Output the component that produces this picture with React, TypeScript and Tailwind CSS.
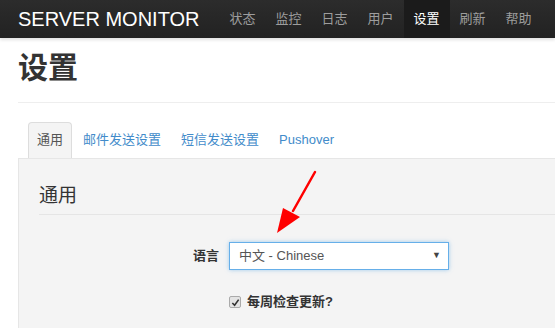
import React from 'react';

const navItems = ['状态', '监控', '日志', '用户', '设置', '刷新', '帮助'];
const tabs = ['通用', '邮件发送设置', '短信发送设置', 'Pushover'];

function App() {
  return (
    <div className="w-[555px] h-[328px] overflow-hidden bg-white text-[#333] font-['Liberation_Sans','Noto_Sans_CJK_SC',sans-serif] relative">
      {/* navbar */}
      <div className="h-[38px] flex items-stretch bg-gradient-to-b from-[#2c2c2c] to-[#222] shadow-[0_2px_3px_rgba(0,0,0,0.12)]">
        <div className="pl-[18px] pr-[20px] flex items-center text-[20px] text-white leading-none">SERVER MONITOR</div>
        <div className="flex">
          {navItems.map((item) => (
            <div
              key={item}
              className={
                item === '设置'
                  ? 'px-[10px] flex items-center text-[13px] text-white bg-[#1b1b1b]'
                  : 'px-[10px] flex items-center text-[13px] text-[#9d9d9d]'
              }>
              {item}
            </div>
          ))}
        </div>
      </div>

      <div className="pl-[18px] pt-[12px]">
        <h1 className="text-[30px] leading-[36px] font-bold text-[#333]">设置</h1>
        <div className="mt-[16px] h-px bg-[#eee]"></div>

        <div className="mt-[19px] pl-[10px] flex">
          {tabs.map((t, i) => (
            <div
              key={t}
              className={
                i === 0
                  ? 'px-[8px] mr-[2px] py-[7px] leading-[20px] text-[13px] text-[#555] bg-[#f4f4f4] border border-[#ddd] border-b-0 rounded-t-[4px]'
                  : 'px-[8px] mr-[2px] py-[7px] leading-[20px] text-[13px] text-[#428bca] border border-transparent'
              }>
              {t}
            </div>
          ))}
        </div>

        <div className="h-[200px] bg-[#f4f4f4] border-l border-t border-[#e6e6e6] pl-[20px] pt-[24px]">
          <div className="text-[19px] leading-[26px] pb-[5px] border-b border-[#e5e5e5] text-[#333]">通用</div>

          <div className="mt-[27px] flex items-center">
            <div className="w-[180px] text-right text-[13px] font-bold text-[#333]">语言</div>
            <div className="ml-[10px] w-[220px] h-[28px] bg-white border border-[#66afe9] shadow-[0_0_4px_rgba(102,175,233,0.6)] flex items-center justify-between pl-[9px] pr-[7px] text-[13px] text-[#555]">
              <span>中文 - Chinese</span>
              <span className="text-[9px] text-[#444]">▼</span>
            </div>
          </div>

          <div className="mt-[22px] pl-[190px] flex items-center h-[20px]">
            <div className="w-[12px] h-[12px] rounded-[2px] border border-[#aaa] bg-[#e4e4e4] flex items-center justify-center">
              <svg width="9" height="9" viewBox="0 0 10 10">
                <path d="M1.5 5.5 L4 8 L8.5 1.8" fill="none" stroke="#333" strokeWidth="1.8" />
              </svg>
            </div>
            <span className="ml-[6px] text-[13px] font-bold text-[#333]">每周检查更新?</span>
          </div>
        </div>
      </div>

      {/* annotation arrow */}
      <svg className="absolute left-[270px] top-[168px]" width="52" height="70" viewBox="0 0 52 70">
        <path d="M45 4 L23 43" stroke="#ff0000" strokeWidth="2.5" strokeLinecap="round" fill="none" />
        <path d="M7 65 L13 40 L30 49 Z" fill="#ff0000" />
      </svg>
    </div>
  );
}

export default App;
